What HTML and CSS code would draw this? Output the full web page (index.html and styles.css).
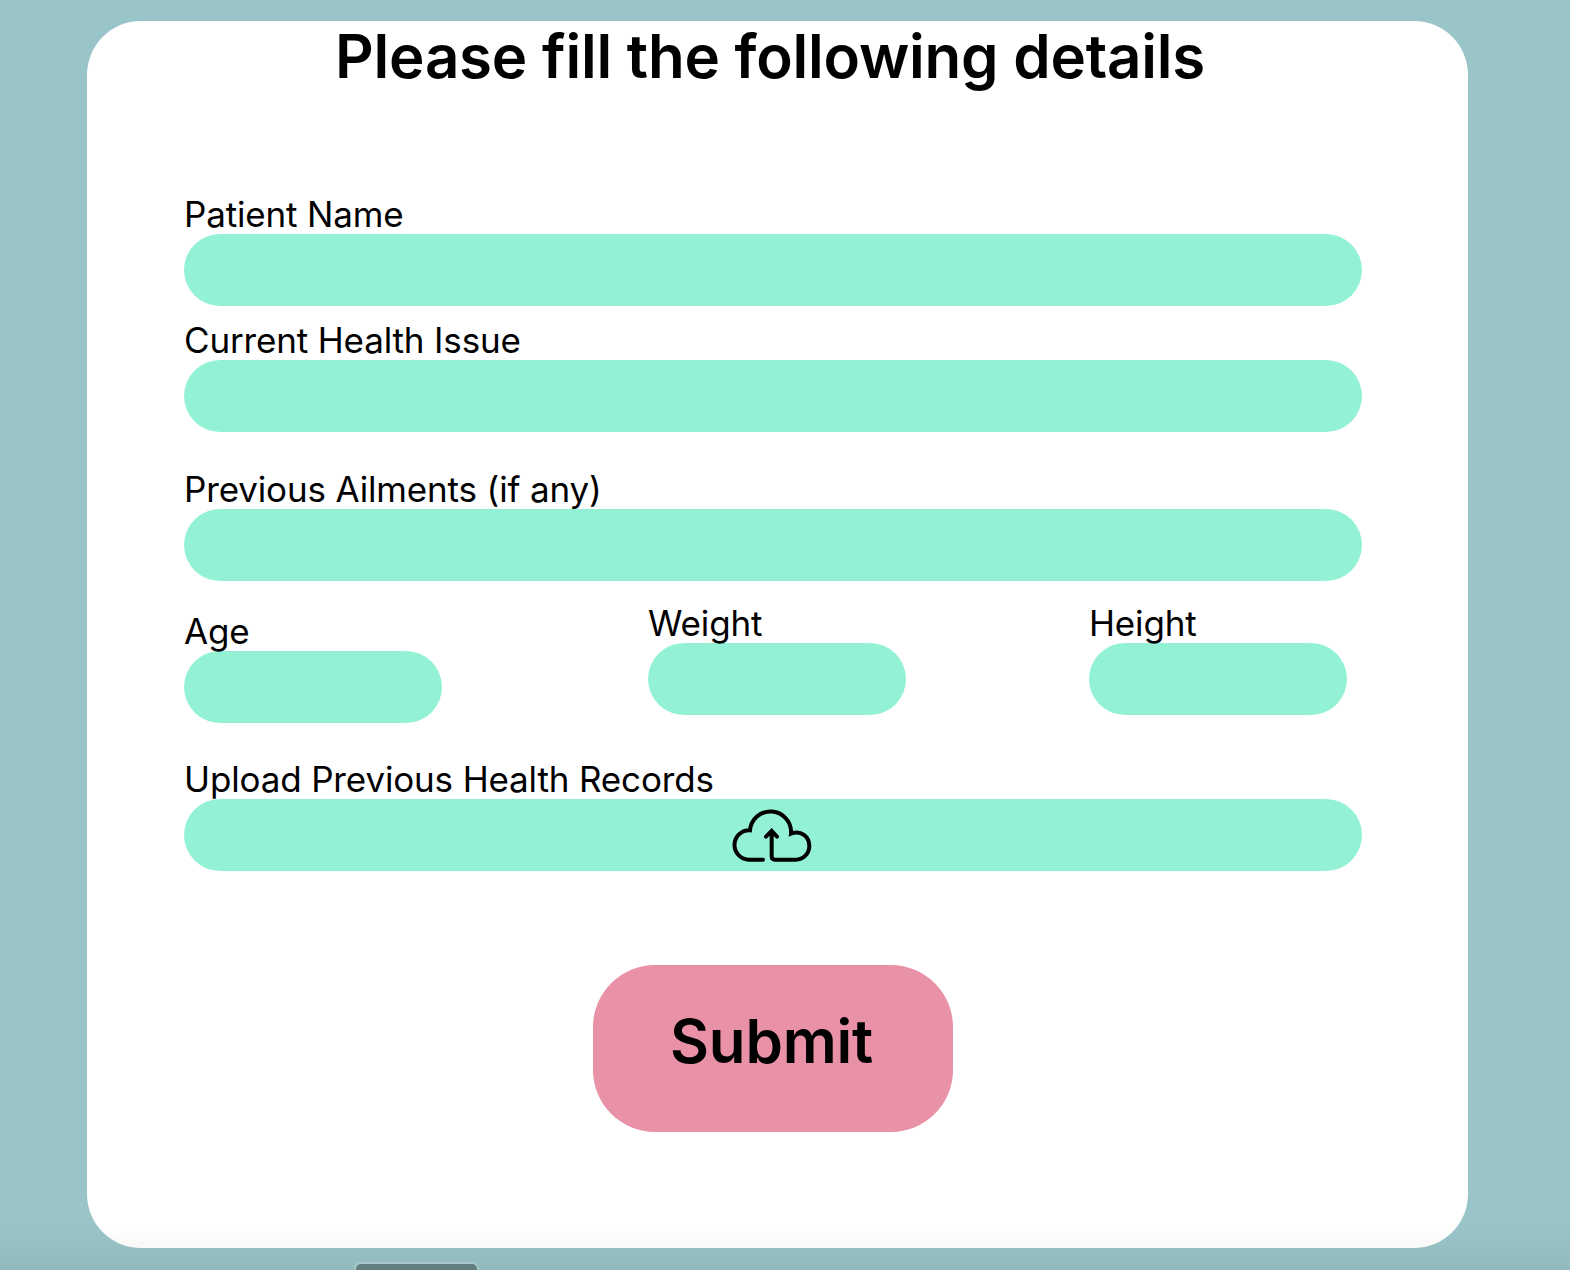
FILE: index.html
```html
<!DOCTYPE html>
<html lang="en">
<head>
<meta charset="utf-8">
<title>Patient details</title>
<link rel="stylesheet" href="styles.css">
</head>
<body>
<main class="card">
<h1 class="title">Please fill the following details</h1>
<form class="form">
<label class="field name"><span class="label">Patient Name</span><span class="input"></span></label>
<label class="field issue"><span class="label">Current Health Issue</span><span class="input"></span></label>
<label class="field ailments"><span class="label">Previous Ailments (if any)</span><span class="input"></span></label>
<div class="measures">
<label class="field age"><span class="label">Age</span><span class="input"></span></label>
<label class="field weight"><span class="label">Weight</span><span class="input"></span></label>
<label class="field height"><span class="label">Height</span><span class="input"></span></label>
</div>
<label class="field upload"><span class="label">Upload Previous Health Records</span><span class="input">
<svg class="cloud" viewBox="66 57 240 160"><path d="M159 209H115A44 44 0 0 1 120 121A61 61 0 0 1 243 131C273 119 298 140 298 168C298 191 280 209 257 209H195Q185 209 185 199V123M168 140L185 123L201 140"/></svg>
</span></label>
<button class="submit" type="button">Submit</button>
</form>
</main>
<div class="dock"></div>
</body>
</html>
```
FILE: styles.css
```css
* { box-sizing: border-box; }
body { margin: 0; height: 1270px; overflow: hidden; background: #99c4c8; font-family: Inter, sans-serif; color: #000; padding-top: 21px; position: relative; }
body::after { content: ""; position: absolute; left: 0; right: 0; bottom: 0; height: 48px; background: linear-gradient(transparent, rgba(0, 0, 0, .05)); }
.card { width: 1381px; height: 1227px; margin-left: 87px; background: #fff; border-radius: 54px; overflow: hidden; }
.title { margin: -1px 0 0 -15px; padding-bottom: 1px; font-size: 60px; line-height: 72px; font-weight: 600; letter-spacing: -.22px; text-align: center; white-space: nowrap; }
.form { display: flex; flex-direction: column; padding: 99px 106px 0 97px; }
.field { display: block; width: 100%; }
.label { display: block; position: relative; z-index: 1; height: 42px; font-size: 35px; font-weight: 380; line-height: 44px; letter-spacing: -.15px; white-space: nowrap; }
.input { height: 72px; border-radius: 36px; background: #93f2d5; display: flex; justify-content: center; }
.issue { margin-top: 12.4px; }
.ailments { margin-top: 34.9px; }
.measures { display: flex; align-items: flex-start; margin-top: 19.7px; }
.measures .field { width: 258px; }
.age { margin-top: 7.6px; }
.weight { margin-left: 206px; }
.height { margin-left: 183px; }
.upload { margin-top: 34.7px; }
.cloud { width: 80px; height: 53.3px; margin: 9.7px 2px 0 0; fill: none; stroke: #000; stroke-width: 12; stroke-linecap: round; overflow: visible; }
.submit { align-self: center; width: 360px; height: 166.3px; margin-top: 94px; border: 0; border-radius: 62px; background: #e891a7; font: 600 60px/72px Inter, sans-serif; letter-spacing: -.2px; color: #000; padding: 0 3px 14px 0; }
.dock { position: absolute; left: 354px; bottom: -10px; width: 125px; height: 18px; border: 2px solid #afd0d2; border-radius: 7px; background: #658386; }
```
